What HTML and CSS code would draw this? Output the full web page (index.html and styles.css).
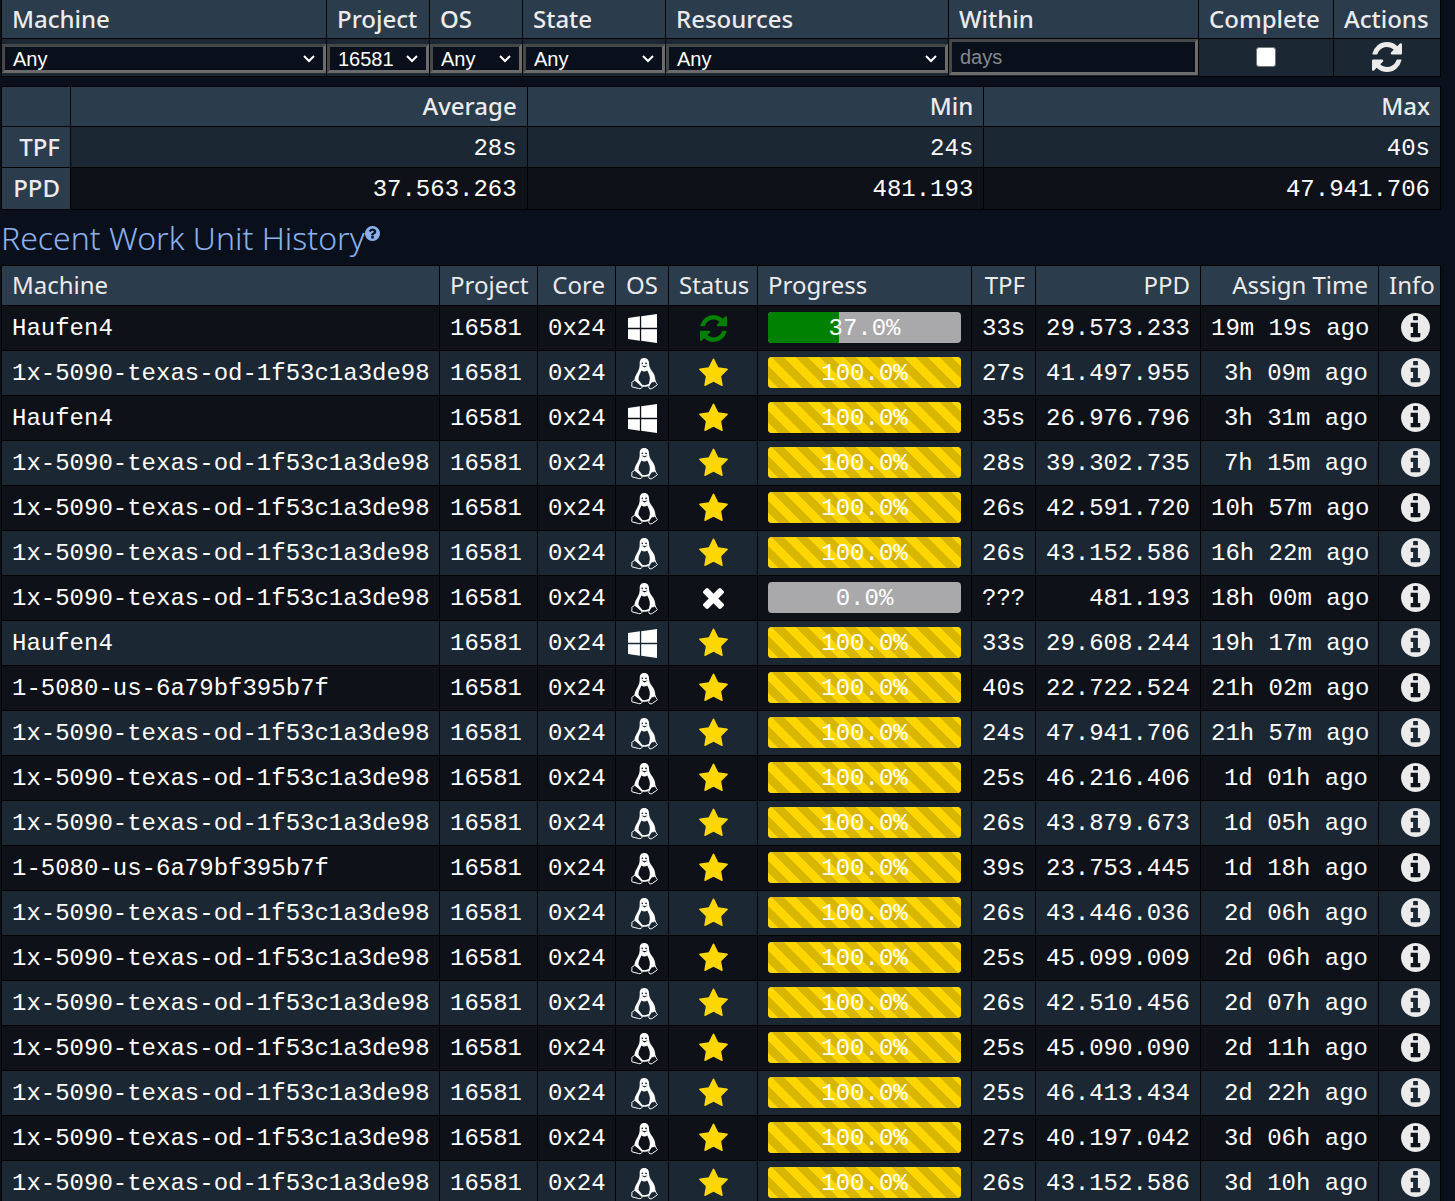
FILE: index.html
```
<!doctype html>
<html lang="en">
  <head>
    <meta charset="utf-8"/>
    <meta name="viewport" content="width=device-width, initial-scale=1.0">
    <title>Work Unit History</title>
    <link rel="stylesheet" href="styles.css">
  </head>
  <body>

    <!-- icon sprite -->
    <svg class="sprite" aria-hidden="true">
      <symbol id="refresh" viewBox="0 0 1536 1536">
        <path d="M1511 928q0 5-1 7-64 268-268 434.5t-478 166.5q-146 0-282.5-55t-243.5-157l-129 129q-19 19-45 19t-45-19-19-45v-448q0-26 19-45t45-19h448q26 0 45 19t19 45-19 45l-137 137q71 66 161 102t187 36q134 0 250-65t186-179q11-17 53-117 8-23 30-23h192q13 0 22.5 9.5t9.5 22.5zm25-800v448q0 26-19 45t-45 19h-448q-26 0-45-19t-19-45 19-45l138-138q-148-137-349-137-134 0-250 65t-186 179q-11 17-53 117-8 23-30 23h-199q-13 0-22.5-9.5t-9.5-22.5v-7q65-268 270-434.5t480-166.5q146 0 284 55.5t245 156.5l130-129q19-19 45-19t45 19 19 45z"/>
      </symbol>
      <symbol id="star" viewBox="64 0 1664 1792">
        <path d="M1728 647q0 22-26 48l-363 354 86 500q1 7 1 20 0 21-10.5 35.5t-30.5 14.5q-19 0-40-12l-449-236-449 236q-22 12-40 12-21 0-31.5-14.5t-10.5-35.5q0-6 2-20l86-500-364-354q-25-27-25-48 0-37 56-46l502-73 225-455q19-41 49-41t49 41l225 455 502 73q56 9 56 46z"/>
      </symbol>
      <symbol id="times" viewBox="302 366 1188 1188">
        <path d="M1490 1322q0 40-28 68l-136 136q-28 28-68 28t-68-28l-294-294-294 294q-28 28-68 28t-68-28l-136-136q-28-28-28-68t28-68l294-294-294-294q-28-28-28-68t28-68l136-136q28-28 68-28t68 28l294 294 294-294q28-28 68-28t68 28l136 136q28 28 28 68t-28 68l-294 294 294 294q28 28 28 68z"/>
      </symbol>
      <symbol id="info" viewBox="0 128 1536 1536">
        <path d="M1024 1376v-160q0-14-9-23t-23-9h-96v-512q0-14-9-23t-23-9h-320q-14 0-23 9t-9 23v160q0 14 9 23t23 9h96v320h-96q-14 0-23 9t-9 23v160q0 14 9 23t23 9h448q14 0 23-9t9-23zm-128-896v-160q0-14-9-23t-23-9h-192q-14 0-23 9t-9 23v160q0 14 9 23t23 9h192q14 0 23-9t9-23zm640 416q0 209-103 385.5t-279.5 279.5-385.5 103-385.5-103-279.5-279.5-103-385.5 103-385.5 279.5-279.5 385.5-103 385.5 103 279.5 279.5 103 385.5z"/>
      </symbol>
      <symbol id="question" viewBox="0 128 1536 1536">
        <path d="M896 1376v-192q0-14-9-23t-23-9h-192q-14 0-23 9t-9 23v192q0 14 9 23t23 9h192q14 0 23-9t9-23zm256-672q0-88-55.5-163t-138.5-116-170-41q-243 0-371 213-15 24 8 42l132 100q7 6 19 6 16 0 25-12 53-68 86-92 34-24 86-24 48 0 85.5 26t37.5 59q0 38-20 61t-68 45q-63 28-115.5 86.5t-52.5 125.5v36q0 14 9 23t23 9h192q14 0 23-9t9-23q0-19 21.5-49.5t54.5-49.5q32-18 49-28.5t46-35 44.5-48 28-60.5 12.5-81zm384 192q0 209-103 385.5t-279.5 279.5-385.5 103-385.5-103-279.5-279.5-103-385.5 103-385.5 279.5-279.5 385.5-103 385.5 103 279.5 279.5 103 385.5z"/>
      </symbol>
      <symbol id="windows" viewBox="64 128 1664 1664">
        <path d="M746 1006v651l-682-94v-557h682zm0-743v659h-682v-565zm982 743v786l-907-125v-661h907zm0-878v794h-907v-669z"/>
      </symbol>
      <symbol id="linux" viewBox="0 0 27 32">
        <path fill-rule="evenodd" d="M13.2 0C16.600 0 18 2.400 18 5.500C18 9 19.500 10.800 21 13C23.200 16 24.800 19.500 24.200 23L20.500 24.500C19.500 27 17.500 28.800 14 28.800C11 28.800 9.300 28 7.800 26L3.500 22.500C3.300 19.500 5 17 6.500 14.200C8.200 11 8.800 9.500 8.700 5.500C8.600 2.200 10 0 13.200 0ZM10.400 12.500C9.500 15 7.200 18 7.500 22L11.500 27C14 27.500 17.500 26.800 18.300 25L18.800 21.500C19.300 18.500 17.500 15 16.200 12.500C14.500 13.800 12.300 13.800 10.400 12.500ZM11 4.600C10.300 4.800 10.400 6 11 6.200L12 5.800C12 5 11.500 4.400 11 4.600ZM14.800 4.500C14.200 4.800 14 5.600 14.300 5.900L15.800 6.200C16.200 5.200 15.500 4.200 14.800 4.500ZM10.500 7.400L13.500 9.600L16.800 7.400L13.600 8Z"/>
        <path class="foot" d="M4 21.500L6.500 22L11 28.200C11.500 30 9.500 31.300 7.500 30.500L1 28.800C0 28 1.500 26.500 .8 24.500C1 23.300 3 23.800 4 21.500Z"/>
        <path class="foot" d="M19.500 22.300C21 24.500 23 24 24.300 22.500C24.300 24.800 26.500 26 26.300 26.800C25 28.200 23.500 28.500 21.500 30.300C19.800 31.500 17.300 31 17.800 28.500Z"/>
      </symbol>
    </svg>

    <table class="filters">
      <colgroup>
        <col>
        <col class="f-project">
        <col class="f-os">
        <col class="f-state">
        <col class="f-resources">
        <col class="f-within">
        <col class="f-complete">
        <col class="f-actions">
      </colgroup>
      <tr>
        <th><label for="machine">Machine</label></th>
        <th><label for="project">Project</label></th>
        <th><label for="os">OS</label></th>
        <th><label for="state">State</label></th>
        <th><label for="resources">Resources</label></th>
        <th><label for="within">Within</label></th>
        <th><label for="complete">Complete</label></th>
        <th>Actions</th>
      </tr>
      <tr>
        <td><select id="machine"><option>Any</option></select></td>
        <td><select id="project"><option>16581</option></select></td>
        <td><select id="os"><option>Any</option></select></td>
        <td><select id="state"><option>Any</option></select></td>
        <td><select id="resources"><option>Any</option></select></td>
        <td><input type="text" id="within" placeholder="days"></td>
        <td class="center"><input type="checkbox" id="complete"></td>
        <td class="center"><button aria-label="Refresh"><svg class="reload"><use href="#refresh"/></svg></button></td>
      </tr>
    </table>

    <table class="summary">
      <colgroup>
        <col class="s-name">
        <col>
        <col>
        <col>
      </colgroup>
      <tr><th></th><th>Average</th><th>Min</th><th>Max</th></tr>
      <tr><th>TPF</th><td>28s</td><td>24s</td><td>40s</td></tr>
      <tr><th>PPD</th><td>37.563.263</td><td>481.193</td><td>47.941.706</td></tr>
    </table>

    <h2>Recent Work Unit History<a href="#help" aria-label="Help"><svg><use href="#question"/></svg></a></h2>

    <table class="history">
      <colgroup>
        <col class="h-machine">
        <col class="h-project">
        <col class="h-core">
        <col class="h-os">
        <col class="h-status">
        <col>
        <col class="h-tpf">
        <col class="h-ppd">
        <col class="h-assign">
        <col class="h-info">
      </colgroup>
      <thead>
        <tr>
          <th>Machine</th>
          <th>Project</th>
          <th class="num">Core</th>
          <th class="center">OS</th>
          <th class="center">Status</th>
          <th>Progress</th>
          <th class="num">TPF</th>
          <th class="num">PPD</th>
          <th class="num">Assign Time</th>
          <th>Info</th>
        </tr>
      </thead>
      <tbody id="units"></tbody>
    </table>

    <script>
      var TEXAS = '1x-5090-texas-od-1f53c1a3de98';
      var US = '1-5080-us-6a79bf395b7f';
      var HOME = 'Haufen4';

      // machine, os, status, progress, tpf, ppd, assigned
      var units = [
        [HOME, 'windows', 'refresh', 37, '33s', '29.573.233', '19m 19s ago'],
        [TEXAS, 'linux', 'star', 100, '27s', '41.497.955', '3h 09m ago'],
        [HOME, 'windows', 'star', 100, '35s', '26.976.796', '3h 31m ago'],
        [TEXAS, 'linux', 'star', 100, '28s', '39.302.735', '7h 15m ago'],
        [TEXAS, 'linux', 'star', 100, '26s', '42.591.720', '10h 57m ago'],
        [TEXAS, 'linux', 'star', 100, '26s', '43.152.586', '16h 22m ago'],
        [TEXAS, 'linux', 'times', 0, '???', '481.193', '18h 00m ago'],
        [HOME, 'windows', 'star', 100, '33s', '29.608.244', '19h 17m ago'],
        [US, 'linux', 'star', 100, '40s', '22.722.524', '21h 02m ago'],
        [TEXAS, 'linux', 'star', 100, '24s', '47.941.706', '21h 57m ago'],
        [TEXAS, 'linux', 'star', 100, '25s', '46.216.406', '1d 01h ago'],
        [TEXAS, 'linux', 'star', 100, '26s', '43.879.673', '1d 05h ago'],
        [US, 'linux', 'star', 100, '39s', '23.753.445', '1d 18h ago'],
        [TEXAS, 'linux', 'star', 100, '26s', '43.446.036', '2d 06h ago'],
        [TEXAS, 'linux', 'star', 100, '25s', '45.099.009', '2d 06h ago'],
        [TEXAS, 'linux', 'star', 100, '26s', '42.510.456', '2d 07h ago'],
        [TEXAS, 'linux', 'star', 100, '25s', '45.090.090', '2d 11h ago'],
        [TEXAS, 'linux', 'star', 100, '25s', '46.413.434', '2d 22h ago'],
        [TEXAS, 'linux', 'star', 100, '27s', '40.197.042', '3d 06h ago'],
        [TEXAS, 'linux', 'star', 100, '26s', '43.152.586', '3d 10h ago']
      ];

      function icon(name) {
        return '<svg class="icon-' + name + '"><use href="#' + name + '"/></svg>';
      }

      function bar(percent) {
        var cls = percent == 100 ? 'fill done' : 'fill';
        return '<div class="bar"><div class="' + cls + '" style="width:' + percent + '%"></div>' +
            '<span>' + percent.toFixed(1) + '%</span></div>';
      }

      var html = '';
      units.forEach(function(u) {
        html += '<tr><td>' + u[0] + '</td>' +
            '<td>16581</td>' +
            '<td class="num">0x24</td>' +
            '<td class="center">' + icon(u[1]) + '</td>' +
            '<td class="center">' + icon(u[2]) + '</td>' +
            '<td class="progress">' + bar(u[3]) + '</td>' +
            '<td class="num">' + u[4] + '</td>' +
            '<td class="num">' + u[5] + '</td>' +
            '<td class="num">' + u[6] + '</td>' +
            '<td class="details"><a href="#info" aria-label="Info">' + icon('info') + '</a></td></tr>';
      });
      document.getElementById('units').innerHTML = html;
    </script>
  </body>
</html>
```
FILE: styles.css
```
* {
  box-sizing: border-box;
}

html {
  background: #0a101b;
}

body {
  margin: 0;
  padding: 0 14px 0 1px;
  color: #fff;
  font: 24px "Noto Sans", sans-serif;
}

svg {
  display: inline-block;
  vertical-align: middle;
  fill: currentColor;
}

.sprite {
  position: absolute;
  width: 0;
  height: 0;
}

.foot {
  fill: none;
  stroke: currentColor;
  stroke-width: 1;
}

table {
  width: 100%;
  table-layout: fixed;
  border-collapse: collapse;
}

th, td {
  border: 1px solid #000;
  padding: 0 10px;
  text-align: left;
  white-space: nowrap;
}

th {
  height: 40px;
  background: #2b3c4d;
  color: #ebebeb;
  font-weight: 500;
  line-height: 32px;
}

td {
  background: #1b2834;
  line-height: 32px;
}

.num {
  text-align: right;
}

.center {
  text-align: center;
}

/* filters */

.filters {
  margin-bottom: 9px;
}

.filters th {
  height: 38px;
  padding-top: 1px;
  border-top: 0;
}

.filters td {
  height: 38px;
  padding: 0;
  line-height: 0;
}

.f-project { width: 103px; }
.f-os { width: 93px; }
.f-state { width: 143px; }
.f-resources { width: 283px; }
.f-within { width: 250px; }
.f-complete { width: 135px; }
.f-actions { width: 107px; }

select, input[type=text] {
  width: 100%;
  background: #0a101b;
  color: #fff;
  border: 3px solid;
  border-color: #454749 #6c6c6c #6c6c6c #454749;
  border-radius: 0;
  font: 20px "Liberation Sans", Arial, sans-serif;
}

select {
  height: 29px;
  margin-top: 3px;
  padding: 0 8px;
  appearance: none;
  background-image: url("data:image/svg+xml,%3Csvg xmlns='http://www.w3.org/2000/svg' width='12' height='8'%3E%3Cpath d='M1 1l5 5 5-5' fill='none' stroke='white' stroke-width='2'/%3E%3C/svg%3E");
  background-repeat: no-repeat;
  background-position: right 8px center;
}

input[type=text] {
  height: 36px;
  padding: 0 8px;
}

input::placeholder {
  color: #85888c;
}

input[type=checkbox] {
  width: 20px;
  height: 20px;
  margin: 0;
  appearance: none;
  border: 1px solid #767676;
  border-radius: 3px;
  background: #fff;
}

input[type=checkbox]:checked {
  background: #0075ff;
}

button {
  padding: 0;
  border: 0;
  background: none;
  color: #ebebeb;
  cursor: pointer;
}

.reload {
  width: 30px;
  height: 30px;
}

/* summary */

.s-name {
  width: 69px;
}

.summary th, .summary td {
  text-align: right;
}

.summary tr + tr th {
  height: 41px;
}

.summary tr:last-child th {
  height: 42px;
}

.summary td, .history td {
  padding-top: 2px;
  font-family: "Liberation Mono", monospace;
}

.summary td {
  padding-top: 4px;
}

.summary tr:last-child td {
  background: #0f1119;
}

h2 {
  margin: 0;
  height: 55px;
  color: #8ab0ee;
  font-size: 32px;
  font-weight: 300;
  line-height: 55px;
}

h2 a {
  color: inherit;
}

h2 svg {
  width: 15px;
  height: 15px;
  vertical-align: 9px;
}

/* history */

.h-machine { width: 438px; }
.h-project { width: 98px; }
.h-core { width: 78px; }
.h-os { width: 53px; }
.h-status { width: 89px; }
.h-tpf { width: 64px; }
.h-ppd { width: 165px; }
.h-assign { width: 178px; }
.h-info { width: 62px; }

.history th {
  font-weight: 400;
}

.history td {
  height: 45px;
}

.history tbody tr:nth-child(odd) td {
  background: #0f1119;
}

.history td.center {
  padding: 2px 0 0;
  line-height: 0;
}

.history td.progress {
  padding-top: 0;
}

.history td.details {
  padding-top: 0;
  line-height: 0;
  text-align: right;
}

.history a {
  color: #ebebeb;
}

.bar {
  position: relative;
  height: 31px;
  overflow: hidden;
  border-radius: 4px;
  background: #a9a9ab;
  line-height: 33px;
  text-align: center;
}

.bar span {
  position: relative;
}

.fill {
  position: absolute;
  top: 0;
  left: 0;
  height: 100%;
  background-color: #008000;
}

.fill.done {
  background-color: #ffd700;
  background-image: linear-gradient(45deg, rgba(0,0,0,.15) 25%, transparent 25%, transparent 50%, rgba(0,0,0,.15) 50%, rgba(0,0,0,.15) 75%, transparent 75%);
  background-position: 4px 0;
  background-size: 24px 24px;
}

.icon-windows {
  width: 29px;
  height: 29px;
}

.icon-linux {
  width: 27px;
  height: 32px;
  margin-left: 4px;
}

.icon-star {
  width: 29px;
  height: 31px;
  color: #ffd700;
}

.icon-refresh {
  width: 27px;
  height: 27px;
  color: #008000;
}

.icon-times {
  width: 21px;
  height: 21px;
}

.icon-info {
  width: 29px;
  height: 29px;
}
```
